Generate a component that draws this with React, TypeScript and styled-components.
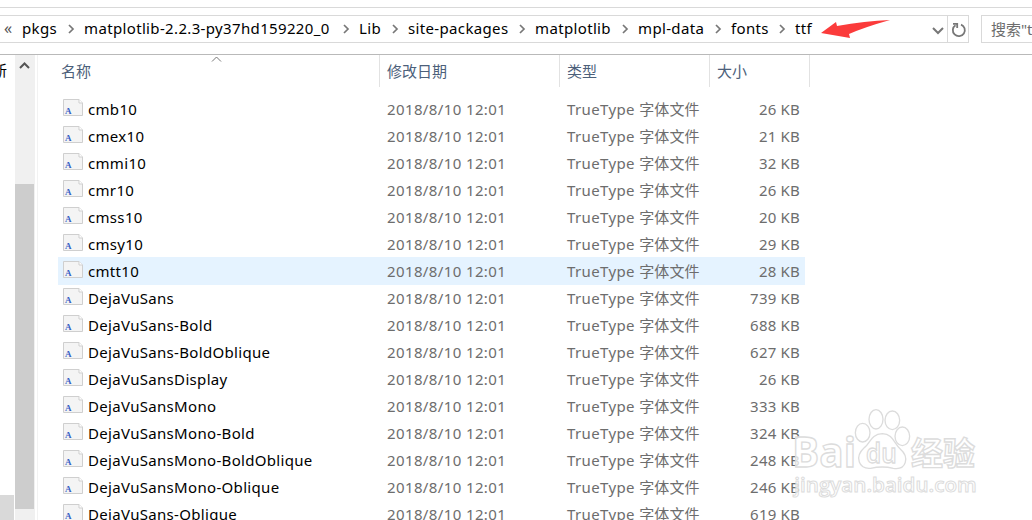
import styled, { createGlobalStyle } from "styled-components";

const GlobalStyle = createGlobalStyle`
  * {
    box-sizing: border-box;
  }
  body {
    margin: 0;
    background-color: white;
    font-family: "Noto Sans", "Noto Sans CJK SC", sans-serif;
    font-size: 15px;
    overflow: hidden;
  }
`;

const Window = styled.div`
  position: relative;
  display: flex;
  flex-direction: column;
  width: 1032px;
  height: 520px;
  padding-top: 7px;
  overflow: hidden;
  white-space: nowrap;
`;

const Toolbar = styled.div`
  display: flex;
  flex: none;
  gap: 12px;
  height: 48px;
  padding: 7px 0 12px;
  border-top: 1px solid #d9d9d9;
  border-bottom: 1px solid #b9b9b9;
`;

const AddressBar = styled.div`
  display: flex;
  flex: none;
  align-items: center;
  width: 969px;
  height: 28px;
  border: 1px solid #d9d9d9;
  border-left: 0;
`;

const Overflow = styled.span`
  flex: none;
  width: 22px;
  padding: 0 0 2px 4px;
  color: #555;
  font-size: 16px;
  line-height: 20px;
`;

const Crumb = styled.span<{ $width: number }>`
  flex: none;
  width: ${({ $width }) => $width}px;
  padding-bottom: 2px;
  color: #000;
  line-height: 24px;
  letter-spacing: 0.35px;
`;

const Separator = styled.svg`
  flex: none;
  width: 27px;
  height: 12px;
  fill: none;
  stroke: #777;
  stroke-width: 1.7;
`;

const DropIcon = styled.svg`
  width: 12px;
  height: 8px;
  margin: 3px 3px 0 auto;
  fill: none;
  stroke: #777;
  stroke-width: 2;
`;

const RefreshBox = styled.div`
  display: flex;
  align-items: center;
  justify-content: center;
  width: 21px;
  height: 26px;
  padding: 2px 0 0 2px;
  border-left: 1px solid #d9d9d9;
`;

const SearchBox = styled.div`
  flex: none;
  width: 160px;
  height: 28px;
  padding-left: 9px;
  border: 1px solid #d9d9d9;
  color: #6d6d6d;
  line-height: 27px;
`;

const Body = styled.div`
  display: flex;
  flex: 1;
  min-height: 0;
`;

const NavPane = styled.div`
  display: flex;
  flex-direction: column;
  justify-content: space-between;
  width: 15px;
  overflow: hidden;
`;

const NavLabel = styled.span`
  margin: 3px 0 0 -8px;
  color: #000;
  line-height: 24px;
`;

const NavItem = styled.div`
  width: 14px;
  height: 25px;
  background-color: #d9d9d9;
`;

const Scrollbar = styled.div`
  display: flex;
  flex-direction: column;
  width: 20px;
  background-color: #f0f0f0;
`;

const ScrollUp = styled.svg`
  flex: none;
  width: 20px;
  height: 129px;
  fill: none;
  stroke: #555;
  stroke-width: 2;
`;

const Thumb = styled.div`
  width: 19px;
  height: 325px;
  background-color: #cdcdcd;
`;

const FilePane = styled.div`
  flex: 1;
  margin-left: 2px;
  padding-left: 20px;
  border-left: 1px solid #f2f2f2;
  overflow: hidden;
`;

const columns = "322px 180px 150px 100px";

const Header = styled.div`
  display: grid;
  grid-template-columns: ${columns};
  height: 32px;
  margin-bottom: 8px;
`;

const HeaderCell = styled.div`
  position: relative;
  padding-left: 7px;
  border-right: 1px solid #e2e2e2;
  color: #4c607a;
  line-height: 32px;

  &:first-child {
    padding-left: 3px;
  }
`;

const SortMark = styled.svg`
  position: absolute;
  top: 1px;
  left: 153px;
  width: 11px;
  height: 6px;
  fill: none;
  stroke: #777;
`;

const Row = styled.div<{ $hover: boolean }>`
  display: grid;
  grid-template-columns: ${columns};
  width: 747px;
  height: ${({ $hover }) => ($hover ? 28 : 27)}px;
  margin-bottom: ${({ $hover }) => ($hover ? -1 : 0)}px;
  background-color: ${({ $hover }) => ($hover ? "#e5f3ff" : "transparent")};
  line-height: 28px;
`;

const Name = styled.div`
  display: flex;
  gap: 5px;
  padding-left: 5px;
  color: #000;
  letter-spacing: 0.32px;
`;

const Cell = styled.div`
  padding-left: 7px;
  color: #6d6d6d;
  letter-spacing: 0.38px;
`;

const Hanzi = styled.span`
  letter-spacing: 0.1px;
`;

const Size = styled(Cell)`
  padding-right: 10px;
  letter-spacing: 0.2px;
  text-align: right;
`;

const FileIcon = styled.svg`
  flex: none;
  width: 20px;
  height: 17px;
  margin-top: 4px;
`;

const Arrow = styled.svg`
  position: absolute;
  top: 19px;
  left: 820px;
  width: 72px;
  height: 20px;
  fill: #fb3b3b;
`;

const Watermark = styled.svg`
  position: absolute;
  top: 390px;
  left: 740px;
  width: 292px;
  height: 130px;
  fill: rgba(255, 255, 255, 0.75);
  stroke: #dcdcdc;
  stroke-width: 4;
  font-family: "Open Sans", "Noto Sans CJK SC", sans-serif;
  font-weight: 600;
`;

const crumbs = [
  { label: "pkgs", width: 35 },
  { label: "matplotlib-2.2.3-py37hd159220_0", width: 248 },
  { label: "Lib", width: 22 },
  { label: "site-packages", width: 100 },
  { label: "matplotlib", width: 76 },
  { label: "mpl-data", width: 66 },
  { label: "fonts", width: 37 },
  { label: "ttf", width: 18 },
];

const files = [
  { name: "cmb10", size: 26 },
  { name: "cmex10", size: 21 },
  { name: "cmmi10", size: 32 },
  { name: "cmr10", size: 26 },
  { name: "cmss10", size: 20 },
  { name: "cmsy10", size: 29 },
  { name: "cmtt10", size: 28 },
  { name: "DejaVuSans", size: 739 },
  { name: "DejaVuSans-Bold", size: 688 },
  { name: "DejaVuSans-BoldOblique", size: 627 },
  { name: "DejaVuSansDisplay", size: 26 },
  { name: "DejaVuSansMono", size: 333 },
  { name: "DejaVuSansMono-Bold", size: 324 },
  { name: "DejaVuSansMono-BoldOblique", size: 248 },
  { name: "DejaVuSansMono-Oblique", size: 246 },
  { name: "DejaVuSans-Oblique", size: 619 },
];

function FontFile() {
  return (
    <FileIcon viewBox="0 0 20 17">
      <path d="M.5 .5H16L19.5 4V16.5H.5Z" fill="#f4f4f4" stroke="#cfcfcf" />
      <path d="M16 .5V4H19.5" fill="#fff" stroke="#cfcfcf" />
      <text
        x="2"
        y="15"
        fill="#3560c4"
        fontFamily="Liberation Serif, serif"
        fontSize="9"
        fontWeight="bold"
        letterSpacing="0"
      >
        A
      </text>
    </FileIcon>
  );
}

export default function App() {
  return (
    <Window>
      <GlobalStyle />
      <Toolbar>
        <AddressBar>
          <Overflow>«</Overflow>
          {crumbs.map(({ label, width }, i) => [
            i > 0 ? (
              <Separator key={`${label}-sep`} viewBox="0 0 27 12">
                <path d="M12 2L16 6L12 10" />
              </Separator>
            ) : null,
            <Crumb key={label} $width={width}>
              {label}
            </Crumb>,
          ])}
          <DropIcon viewBox="0 0 12 8">
            <path d="M1 1L6 6L11 1" />
          </DropIcon>
          <RefreshBox>
            <svg width="16" height="16" viewBox="0 0 16 16" fill="none" stroke="#777" strokeWidth="1.8">
              <path d="M10 2.6A6 6 0 1 1 4.5 3.2" />
              <path d="M2 1.8H6.2V6" />
            </svg>
          </RefreshBox>
        </AddressBar>
        <SearchBox>搜索"ttf"</SearchBox>
      </Toolbar>
      <Body>
        <NavPane>
          <NavLabel>新</NavLabel>
          <NavItem />
        </NavPane>
        <Scrollbar>
          <ScrollUp viewBox="0 0 20 129">
            <path d="M5 13L9.5 8.5L14 13" />
          </ScrollUp>
          <Thumb />
        </Scrollbar>
        <FilePane>
          <Header>
            <HeaderCell>
              名称
              <SortMark viewBox="0 0 11 6">
                <path d="M1 5.5L5.5 1L10 5.5" />
              </SortMark>
            </HeaderCell>
            <HeaderCell>修改日期</HeaderCell>
            <HeaderCell>类型</HeaderCell>
            <HeaderCell>大小</HeaderCell>
          </Header>
          {files.map(({ name, size }) => (
            <Row key={name} $hover={name === "cmtt10"}>
              <Name>
                <FontFile />
                {name}
              </Name>
              <Cell>2018/8/10 12:01</Cell>
              <Cell>
                TrueType <Hanzi>字体文件</Hanzi>
              </Cell>
              <Size>{size} KB</Size>
            </Row>
          ))}
        </FilePane>
      </Body>
      <Arrow viewBox="0 0 72 20">
        <path d="M1 14L16 3L17 7Q45 2 70 1Q45 8 29 15L30 19Z" />
      </Arrow>
      <Watermark viewBox="0 0 876 390">
        <text x="156" y="232" fontSize="124" fontWeight="700" textLength="192" lengthAdjust="spacingAndGlyphs">
          Bai
        </text>
        <ellipse cx="368" cy="128" rx="22" ry="28" />
        <ellipse cx="408" cy="88" rx="21" ry="29" />
        <ellipse cx="457" cy="91" rx="22" ry="28" />
        <ellipse cx="487" cy="139" rx="22" ry="28" />
        <path d="M427 131C392 132 391 161 374 172C340 203 359 238 392 235Q427 227 460 235C500 241 509 201 480 176C462 160 459 132 427 131Z" />
        <text x="378" y="219" fontSize="82" textLength="92" lengthAdjust="spacingAndGlyphs">
          du
        </text>
        <text x="513" y="226" fontSize="96" fontWeight="700" textLength="192">
          经验
        </text>
        <text x="163" y="306" fontSize="60" strokeWidth="3" textLength="547" lengthAdjust="spacingAndGlyphs">
          jingyan.baidu.com
        </text>
      </Watermark>
    </Window>
  );
}
